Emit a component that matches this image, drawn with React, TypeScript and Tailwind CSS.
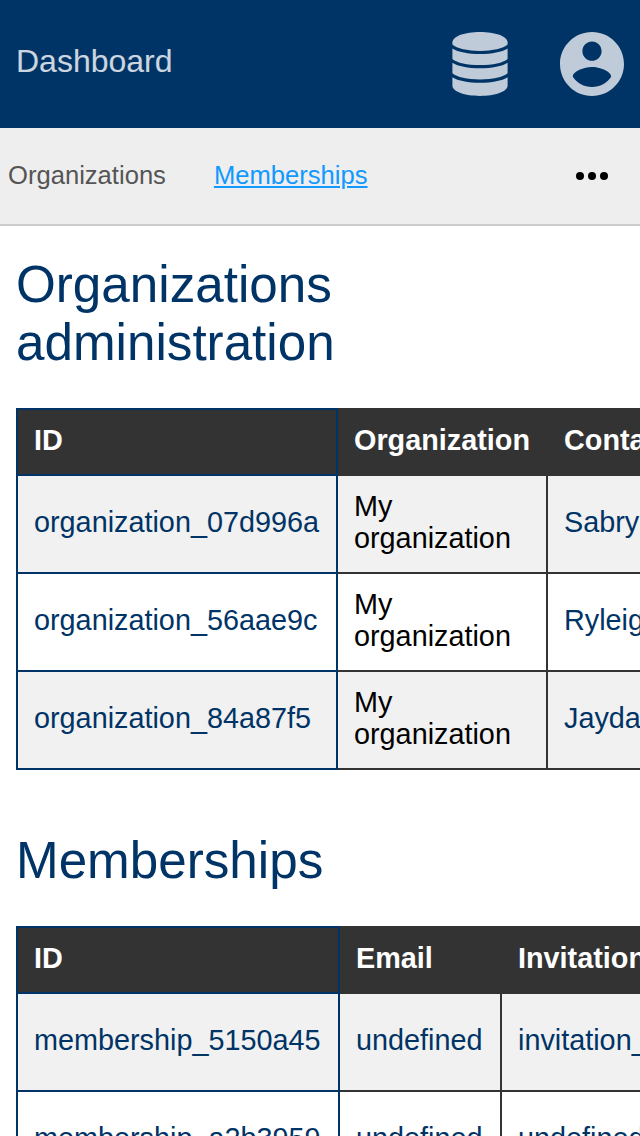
import type { ReactNode } from 'react';

type TableProps = {
  columns: string[];
  rows: ReactNode[][];
  colWidths: ReactNode;
  className: string;
};

function DatabaseIcon() {
  return (
    <svg viewBox="0 0 56 64" className="h-16 w-14" fill="currentColor" aria-hidden="true">
      <path d="M28 0C43 0 55.6 4.2 55.6 10.4V12.6C51 16.600 41 18.900 28 18.900S5 16.600 .4 12.600V10.400C.4 4.200 13 0 28 0z" />
      <path d="M.4 16.400C6 20 16 21.900 28 21.900S50 20 55.600 16.400V26.900C51 30.800 41 33 28 33S5 30.800 .4 26.900z" />
      <path d="M.4 30.800C6 34.400 16 36.300 28 36.300S50 34.400 55.600 30.800V41.300C51 45.200 41 47.400 28 47.400S5 45.200 .4 41.300z" />
      <path d="M.4 45.200C6 48.800 16 50.700 28 50.700S50 48.800 55.600 45.200V53.600C55.600 59.800 43 64 28 64S.4 59.800 .4 53.600z" />
    </svg>
  );
}

function AccountIcon() {
  return (
    <svg viewBox="2 2 20 20" className="size-16" fill="currentColor" aria-hidden="true">
      <path d="M12 2C6.48 2 2 6.48 2 12s4.48 10 10 10 10-4.48 10-10S17.52 2 12 2zm0 3c1.66 0 3 1.34 3 3s-1.34 3-3 3-3-1.34-3-3 1.34-3 3-3zm0 14.2c-2.5 0-4.71-1.28-6-3.22.03-1.99 4-3.08 6-3.08 1.99 0 5.97 1.09 6 3.08-1.29 1.94-3.5 3.22-6 3.22z" />
    </svg>
  );
}

function MoreIcon() {
  return (
    <svg viewBox="0 0 32 8" className="h-2 w-8" fill="currentColor" aria-hidden="true">
      <circle cx="4" cy="4" r="4" />
      <circle cx="16" cy="4" r="4" />
      <circle cx="28" cy="4" r="4" />
    </svg>
  );
}

function DataTable({ columns, rows, colWidths, className }: TableProps) {
  return (
    <table className={`table-fixed border-collapse text-left text-[28.8px] leading-8 ${className}`}>
      <colgroup>{colWidths}</colgroup>
      <thead>
        <tr className="bg-[#333]">
          {columns.map((column) => (
            <th
              key={column}
              className="h-[66px] border-2 border-[#333] px-4 pt-0 pb-1 font-bold whitespace-nowrap text-white first:border-[#036]"
            >
              {column}
            </th>
          ))}
        </tr>
      </thead>
      <tbody>
        {rows.map((row, r) => (
          <tr key={r} className="odd:bg-[#f1f1f1]">
            {row.map((cell, c) => (
              <td key={c} className="h-[98px] border-2 border-[#333] px-4 pt-0 pb-1 align-middle first:border-[#036]">
                {cell}
              </td>
            ))}
          </tr>
        ))}
      </tbody>
    </table>
  );
}

function Ref({ children }: { children: string }) {
  return <a className="whitespace-nowrap text-[#036]">{children}</a>;
}

const organizations = [
  ['organization_07d996a', 'Sabryna'],
  ['organization_56aae9c', 'Ryleigh'],
  ['organization_84a87f5', 'Jayda'],
];

const memberships = [
  ['membership_5150a45', 'undefined', 'invitation_5150a45'],
  ['membership_a2b3959', 'undefined', 'undefined'],
];

export default function App() {
  return (
    <div className="flex h-[1136px] w-[640px] flex-col overflow-hidden bg-white font-['Liberation_Sans',Arial,sans-serif] text-black">
      <header className="flex h-32 shrink-0 items-center justify-between bg-[#036] px-4">
        <a className="pb-1.5 text-[32px] leading-9 text-white/80">Dashboard</a>
        <div className="flex items-center gap-[52px] text-white/75">
          <DatabaseIcon />
          <AccountIcon />
        </div>
      </header>

      <nav className="flex h-[98px] shrink-0 items-center border-b-2 border-[#ccc] bg-[#eee] pr-8 pl-2 text-[25.6px] leading-[30px]">
        <a className="pb-0.5 text-[#555]">Organizations</a>
        <a className="ml-12 pb-0.5 text-[#19f] underline">Memberships</a>
        <span className="ml-auto">
          <MoreIcon />
        </span>
      </nav>

      <main className="flex shrink-0 flex-col px-4">
        <h1 className="mt-[30px] w-[400px] text-[51.2px] leading-[58px] text-[#036]">Organizations administration</h1>
        <DataTable
          className="mt-9 w-[792px]"
          colWidths={
            <>
              <col className="w-[320px]" />
              <col className="w-[210px]" />
              <col className="w-[260px]" />
            </>
          }
          columns={['ID', 'Organization', 'Contact']}
          rows={organizations.map(([id, contact]) => [<Ref>{id}</Ref>, 'My organization', <Ref>{contact}</Ref>])}
        />
        <h2 className="mt-[62px] text-[51.2px] leading-[58px] text-[#036]">Memberships</h2>
        <DataTable
          className="mt-9 w-[786px]"
          colWidths={
            <>
              <col className="w-[322px]" />
              <col className="w-[162px]" />
              <col className="w-[300px]" />
            </>
          }
          columns={['ID', 'Email', 'Invitation']}
          rows={memberships.map((row) => row.map((value) => <Ref>{value}</Ref>))}
        />
      </main>
    </div>
  );
}
